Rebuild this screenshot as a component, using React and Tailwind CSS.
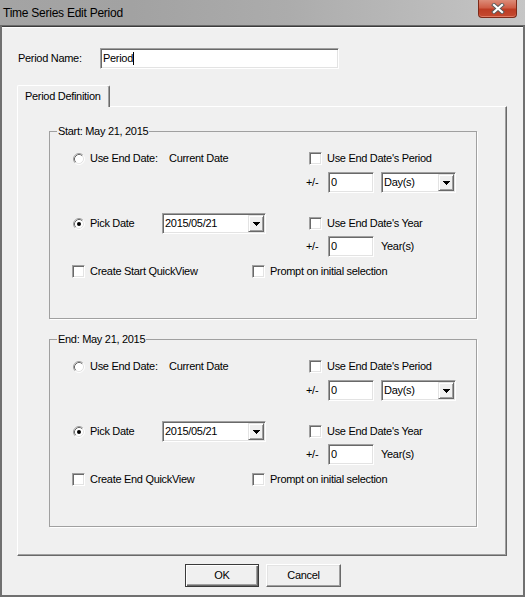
import React from "react";

const ui =
  "font-['Liberation_Sans',Arial,sans-serif] text-[11px] tracking-[-0.3px] leading-[13px] text-black";

const sunken =
  "bg-white border border-t-[#a0a0a0] border-l-[#a0a0a0] border-r-white border-b-white shadow-[inset_1px_1px_0_#696969,inset_-1px_-1px_0_#e3e3e3]";

function Radio({ checked }) {
  return (
    <svg width="12" height="12" viewBox="0 0 12 12" className="shrink-0">
      <circle cx="6" cy="6" r="5" fill="#fff" />
      <path d="M2.11 9.89 A5.5 5.5 0 0 1 9.89 2.11" fill="none" stroke="#a0a0a0" />
      <path d="M9.89 2.11 A5.5 5.5 0 0 1 2.11 9.89" fill="none" stroke="#ffffff" />
      <path d="M2.82 9.18 A4.5 4.5 0 0 1 9.18 2.82" fill="none" stroke="#696969" />
      <path d="M9.18 2.82 A4.5 4.5 0 0 1 2.82 9.18" fill="none" stroke="#e3e3e3" />
      {checked && <circle cx="6" cy="6" r="2" fill="#000" />}
    </svg>
  );
}

function Check() {
  return (
    <div className="w-[13px] h-[13px] shrink-0 bg-white border border-t-[#a0a0a0] border-l-[#a0a0a0] border-r-white border-b-white shadow-[inset_1px_1px_0_#696969,inset_-1px_-1px_0_#e3e3e3]" />
  );
}

function Arrow() {
  return (
    <svg width="7" height="4" viewBox="0 0 7 4" shapeRendering="crispEdges">
      <path d="M0 0h7v1h-1v1h-1v1h-1v1h-1v-1h-1v-1h-1v-1h-1z" fill="#000" />
    </svg>
  );
}

function Combo({ w, value }) {
  return (
    <div className={`${sunken} ${w} h-[21px] flex items-center shrink-0`}>
      <span className="flex-1 pl-[2px]">{value}</span>
      <div className="w-[16px] h-[17px] mr-[1px] bg-[#f0f0f0] border border-t-[#e3e3e3] border-l-[#e3e3e3] border-r-[#696969] border-b-[#696969] shadow-[inset_1px_1px_0_#fff,inset_-1px_-1px_0_#a0a0a0] flex items-center justify-center">
        <Arrow />
      </div>
    </div>
  );
}

function NumBox() {
  return (
    <div className={`${sunken} w-[46px] h-[21px] flex items-center pl-[2px] shrink-0`}>
      0
    </div>
  );
}

function CheckLabel({ children }) {
  return (
    <div className="flex items-center">
      <Check />
      <span className="ml-[5px] whitespace-nowrap">{children}</span>
    </div>
  );
}

function PeriodGroup({ title, kind }) {
  return (
    <fieldset className="w-[428px] border border-[#a0a0a0] shadow-[1px_1px_0_#fff]">
      <legend className="ml-[7px] px-[1px] leading-[14px] whitespace-nowrap">{title}</legend>
      <div className="pl-[23px] pt-[10px] pb-[36px] flex flex-col">
        {/* relative-to-end option + period offset */}
        <div className="flex items-center h-[21px]">
          <div className="w-[236px] flex items-center">
            <Radio />
            <span className="ml-[5px] w-[79px] whitespace-nowrap">Use End Date:</span>
            <span className="whitespace-nowrap">Current Date</span>
          </div>
          <CheckLabel>Use End Date's Period</CheckLabel>
        </div>
        <div className="flex items-center h-[21px] mt-[3px]">
          <div className="w-[233px]" />
          <span className="w-[22px] whitespace-nowrap">+/-</span>
          <NumBox />
          <div className="ml-[7px]">
            <Combo w="w-[75px]" value="Day(s)" />
          </div>
        </div>

        {/* explicit date option + year offset */}
        <div className="flex items-center h-[21px] mt-[20px]">
          <div className="w-[236px] flex items-center">
            <Radio checked />
            <span className="ml-[5px] w-[72px] whitespace-nowrap">Pick Date</span>
            <Combo w="w-[104px]" value="2015/05/21" />
          </div>
          <CheckLabel>Use End Date's Year</CheckLabel>
        </div>
        <div className="flex items-center h-[21px] mt-[2px]">
          <div className="w-[233px]" />
          <span className="w-[22px] whitespace-nowrap">+/-</span>
          <NumBox />
          <span className="ml-[7px] whitespace-nowrap">Year(s)</span>
        </div>

        <div className="flex items-center h-[21px] mt-[4px]">
          <div className="w-[180px] -ml-[1px]">
            <CheckLabel>{`Create ${kind} QuickView`}</CheckLabel>
          </div>
          <CheckLabel>Prompt on initial selection</CheckLabel>
        </div>
      </div>
    </fieldset>
  );
}

function TitleBar() {
  return (
    <div className="h-[26px] flex items-start bg-[linear-gradient(to_right,#a4a4a4_0%,#a2a2a2_25%,#acacac_55%,#bababa_80%,#c6c6c6_100%)] border-b border-[#6a6a6a]">
      <span className="mt-[5px] ml-[3px] font-['Liberation_Sans',Arial,sans-serif] text-[12px] tracking-[-0.25px] leading-[16px] text-black whitespace-nowrap">
        Time Series Edit Period
      </span>
      <div className="ml-auto mr-[8px] w-[39px] h-[18px] rounded-b-[4px] border border-t-0 border-[#7d2a19] bg-[linear-gradient(to_bottom,#dc8c79_0%,#cf5e47_45%,#bd3c24_55%,#c44a30_100%)] shadow-[inset_0_-1px_0_#e07a63] flex items-center justify-center">
        <svg width="14" height="11" viewBox="0 0 14 11">
          <path d="M3 2 L11 9 M11 2 L3 9" stroke="#5a5a5a" strokeWidth="4" strokeLinecap="square" />
          <path d="M3 2 L11 9 M11 2 L3 9" stroke="#ffffff" strokeWidth="2.2" strokeLinecap="square" />
        </svg>
      </div>
    </div>
  );
}

export default function App() {
  return (
    <div className={`w-[525px] h-[597px] flex flex-col bg-[#707070] ${ui}`}>
      <TitleBar />
      <div className="h-[1px] mx-[2px] bg-[#3c3c3c]" />
      <div className="flex-1 mx-[2px] mb-[2px] bg-[#f0f0f0] border-t border-white flex flex-col pl-[15px]">
        {/* name row */}
        <div className="flex items-center h-[21px] mt-[20px]">
          <span className="w-[83px] pl-[1px] whitespace-nowrap">Period Name:</span>
          <div className={`${sunken} w-[239px] h-[21px] flex items-center pl-[2px]`}>
            <span>Period</span>
            <span className="w-[1px] h-[13px] bg-black" />
          </div>
        </div>

        {/* tab strip */}
        <div className="mt-[16px] flex">
          <div className="relative z-10 -mb-[1px] w-[93px] h-[22px] bg-[#f0f0f0] rounded-t-[2px] border-t border-l border-r border-t-white border-l-white border-r-[#696969] shadow-[inset_-1px_0_0_#a0a0a0] flex items-center pl-[7px] pb-[1px] whitespace-nowrap">
            Period Definition
          </div>
        </div>

        {/* tab page */}
        <div className="w-[490px] h-[450px] border border-t-white border-l-white border-r-[#696969] border-b-[#696969] shadow-[inset_-1px_-1px_0_#a0a0a0] pt-[17px] pl-[31px] flex flex-col">
          <PeriodGroup title="Start: May 21, 2015" kind="Start" />
          <div className="mt-[13px]">
            <PeriodGroup title="End: May 21, 2015" kind="End" />
          </div>
        </div>

        {/* dialog buttons */}
        <div className="w-[490px] mt-[8px] flex justify-center gap-[7px] pl-[2px]">
          <button className="w-[74px] h-[23px] bg-[#f0f0f0] border border-[#3a3a3a] shadow-[inset_1px_1px_0_#fff,inset_-1px_-1px_0_#696969,inset_-2px_-2px_0_#a0a0a0] flex items-center justify-center">
            OK
          </button>
          <button className="w-[75px] h-[23px] bg-[#f0f0f0] border border-t-white border-l-white border-r-[#696969] border-b-[#696969] shadow-[inset_-1px_-1px_0_#a0a0a0,inset_1px_1px_0_#e3e3e3] flex items-center justify-center">
            Cancel
          </button>
        </div>
      </div>
    </div>
  );
}
